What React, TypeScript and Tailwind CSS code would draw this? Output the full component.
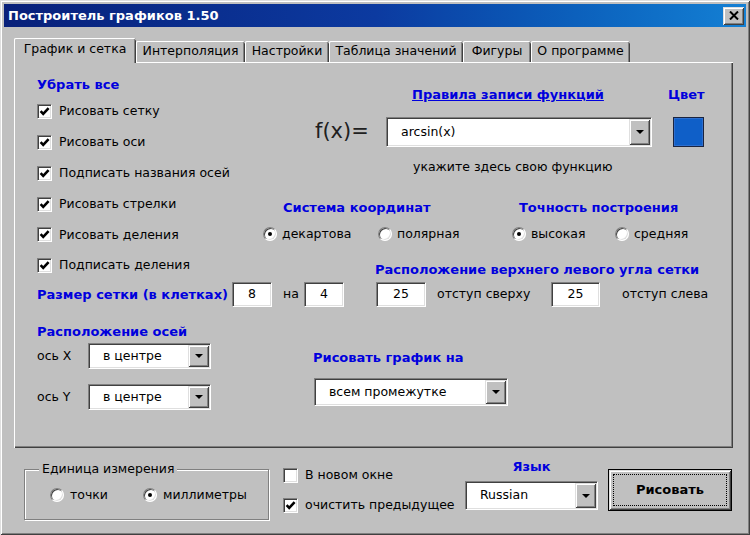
import React from "react";

const sunken =
  "bg-white border border-t-[#808080] border-l-[#808080] border-r-white border-b-white shadow-[inset_1px_1px_0_#404040,inset_-1px_-1px_0_#dfdfdf]";
const raised =
  "bg-[#c0c0c0] shadow-[inset_1px_1px_0_#dfdfdf,inset_-1px_-1px_0_#404040,inset_2px_2px_0_#fff,inset_-2px_-2px_0_#808080]";

function H({ children, className = "" }: { children: React.ReactNode; className?: string }) {
  return <span className={`text-[13px] font-bold text-[#0000dd] whitespace-nowrap ${className}`}>{children}</span>;
}

function Check({ checked, label }: { checked?: boolean; label: string }) {
  return (
    <div className="flex items-center gap-[7px] whitespace-nowrap">
      <span className={`w-[15px] h-[15px] shrink-0 flex items-center justify-center ${sunken}`}>
        {checked && (
          <svg width="11" height="11" viewBox="0 0 11 11">
            <path d="M1.6 5.2 L4.2 7.8 L9.6 2.2" stroke="black" strokeWidth="2.6" fill="none" />
          </svg>
        )}
      </span>
      <span>{label}</span>
    </div>
  );
}

function Radio({ checked, label, className = "" }: { checked?: boolean; label: string; className?: string }) {
  return (
    <div className={`flex items-center gap-[5px] whitespace-nowrap ${className}`}>
      <span
        className={`w-[14px] h-[14px] shrink-0 rounded-full flex items-center justify-center ${sunken}`}
      >
        {checked && <span className="w-[4px] h-[4px] rounded-full bg-black" />}
      </span>
      <span>{label}</span>
    </div>
  );
}

function Combo({ value, className = "" }: { value: string; className?: string }) {
  return (
    <div className={`flex items-stretch pl-[14px] pr-[1px] ${sunken} ${className}`}>
      <span className="flex-1 flex items-center whitespace-nowrap">{value}</span>
      <span className={`w-[21px] my-[1px] flex items-center justify-center ${raised}`}>
        <svg width="8" height="4" viewBox="0 0 8 4">
          <path d="M0 0h8L4 4z" fill="black" />
        </svg>
      </span>
    </div>
  );
}

function Field({ value, className = "" }: { value: string; className?: string }) {
  return <div className={`flex items-center justify-center ${sunken} ${className}`}>{value}</div>;
}

const tabs = [
  { label: "График и сетка", w: "w-[122px]" },
  { label: "Интерполяция", w: "w-[109px]" },
  { label: "Настройки", w: "w-[84px]" },
  { label: "Таблица значений", w: "w-[134px]" },
  { label: "Фигуры", w: "w-[68px]" },
  { label: "О программе", w: "w-[99px]" },
];

export default function App() {
  return (
    <div className="w-[750px] h-[535px] p-[4px] bg-[#c0c0c0] text-[12.5px] text-black font-['DejaVu_Sans',sans-serif] select-none shadow-[inset_1px_1px_0_#dfdfdf,inset_-1px_-1px_0_#404040,inset_2px_2px_0_#fff,inset_-2px_-2px_0_#808080]">
      {/* title bar */}
      <div className="h-[23px] flex items-center bg-linear-to-r from-[#08207a] via-[#0c3aa0] to-[#1480d4]">
        <span className="pl-[4px] text-[13px] font-bold text-white">Построитель графиков 1.50</span>
        <span className={`ml-auto mr-[2px] w-[21px] h-[18px] flex items-center justify-center ${raised}`}>
          <svg width="10" height="9" viewBox="0 0 10 9">
            <path d="M1 0.5 L9 8.5 M9 0.5 L1 8.5" stroke="black" strokeWidth="2" />
          </svg>
        </span>
      </div>

      <div className="ml-[10px] mt-[11px]">
        {/* tabs */}
        <div className="h-[24px] flex items-end">
          {tabs.map((t, i) =>
            i === 0 ? (
              <div
                key={t.label}
                className={`${t.w} h-[25px] -mb-[1px] relative z-10 bg-[#c0c0c0] rounded-t-[2px] flex items-center justify-center pb-[2px] shadow-[inset_1px_0_0_#fff,inset_0_1px_0_#fff,inset_-1px_0_0_#404040,inset_-2px_0_0_#808080]`}
              >
                {t.label}
              </div>
            ) : (
              <div
                key={t.label}
                className={`${t.w} h-[21px] bg-[#c0c0c0] rounded-t-[2px] flex items-center justify-center shadow-[inset_1px_0_0_#fff,inset_0_1px_0_#fff,inset_-1px_0_0_#404040,inset_-2px_0_0_#808080]`}
              >
                {t.label}
              </div>
            )
          )}
        </div>

        {/* panel */}
        <div className="w-[719px] h-[386px] pt-[14px] shadow-[inset_1px_1px_0_#fff,inset_-1px_-1px_0_#404040,inset_-2px_-2px_0_#808080]">
          {/* section A */}
          <div className="h-[206px] flex">
            <div className="w-[236px] pl-[23px] flex flex-col">
              <div className="h-[18px] flex items-center">
                <H>Убрать все</H>
              </div>
              <div className="mt-[2.3px] flex flex-col">
                {[
                  "Рисовать сетку",
                  "Рисовать оси",
                  "Подписать названия осей",
                  "Рисовать стрелки",
                  "Рисовать деления",
                  "Подписать деления",
                ].map((l) => (
                  <div key={l} className="h-[30.8px] flex items-center">
                    <Check checked label={l} />
                  </div>
                ))}
              </div>
            </div>

            <div className="flex-1 flex flex-col">
              <div className="mt-[10px] h-[18px] flex items-center">
                <span className="ml-[162px] w-[256px]">
                  <H className="underline">Правила записи функций</H>
                </span>
                <H>Цвет</H>
              </div>
              <div className="mt-[13px] h-[30px] flex items-center">
                <span className="ml-[65px] w-[71px] text-[21px] text-[#202020]">f(x)=</span>
                <Combo value="arcsin(x)" className="w-[266px] h-[30px]" />
                <span className="ml-[21px] w-[31px] h-[30px] bg-[#0f5fc8] border border-[#1a2440] shadow-[inset_0_0_0_1px_#2d6fd0]" />
              </div>
              <div className="mt-[11px] h-[18px] flex items-center">
                <span className="ml-[163px]">укажите здесь свою функцию</span>
              </div>
              <div className="mt-[23px] h-[18px] flex items-center">
                <span className="ml-[33px] w-[236px]">
                  <H>Система координат</H>
                </span>
                <H>Точность построения</H>
              </div>
              <div className="mt-[8px] h-[18px] flex items-center">
                <Radio checked label="декартова" className="ml-[13px] w-[115px]" />
                <Radio label="полярная" className="w-[134px]" />
                <Radio checked label="высокая" className="w-[103px]" />
                <Radio label="средняя" />
              </div>
              <div className="mt-[18px] h-[18px] flex items-center">
                <H className="ml-[125px]">Расположение верхнего левого угла сетки</H>
              </div>
            </div>
          </div>

          {/* section B */}
          <div className="h-[25px] flex items-stretch">
            <span className="ml-[23px] w-[195px] flex items-center">
              <H>Размер сетки (в клетках)</H>
            </span>
            <Field value="8" className="w-[40px]" />
            <span className="ml-[11px] w-[21px] flex items-center">на</span>
            <Field value="4" className="w-[40px]" />
            <Field value="25" className="ml-[32px] w-[50px]" />
            <span className="ml-[11px] w-[114px] flex items-center">отступ сверху</span>
            <Field value="25" className="w-[49px]" />
            <span className="ml-[22px] flex items-center">отступ слева</span>
          </div>

          {/* section C */}
          <div className="flex">
            <div className="w-[299px] pl-[23px] flex flex-col">
              <div className="mt-[16px] h-[18px] flex items-center">
                <H>Расположение осей</H>
              </div>
              <div className="mt-[2px] h-[26px] flex items-center">
                <span className="w-[51px]">ось X</span>
                <Combo value="в центре" className="w-[123px] h-[26px]" />
              </div>
              <div className="mt-[15px] h-[26px] flex items-center">
                <span className="w-[51px]">ось Y</span>
                <Combo value="в центре" className="w-[123px] h-[26px]" />
              </div>
            </div>
            <div className="flex flex-col">
              <div className="mt-[42px] h-[18px] flex items-center">
                <H>Рисовать график на</H>
              </div>
              <Combo value="всем промежутке" className="mt-[11px] ml-[1px] w-[194px] h-[28px]" />
            </div>
          </div>
        </div>

        {/* bottom row */}
        <div className="flex items-start">
          <div className="ml-[10px] mt-[21px] w-[245px] h-[51px] border border-[#808080] shadow-[inset_1px_1px_0_#fff,1px_1px_0_#fff] flex flex-col">
            <span className="-mt-[8px] ml-[14px] px-[3px] w-fit bg-[#c0c0c0] leading-[14px]">Единица измерения</span>
            <div className="mt-[12px] h-[14px] flex items-center">
              <Radio label="точки" className="ml-[25px] w-[93px] gap-[6px]" />
              <Radio checked label="миллиметры" className="gap-[6px]" />
            </div>
          </div>

          <div className="ml-[14px] mt-[19px] w-[182px] flex flex-col">
            <div className="h-[16px] flex items-center">
              <Check label="В новом окне" />
            </div>
            <div className="mt-[14px] h-[16px] flex items-center">
              <Check checked label="очистить предыдущее" />
            </div>
          </div>

          <div className="mt-[12px] w-[133px] flex flex-col">
            <div className="h-[14px] flex items-center justify-center">
              <H>Язык</H>
            </div>
            <Combo value="Russian" className="mt-[7px] h-[29px]" />
          </div>

          <div className="ml-[10px] mt-[21px] w-[124px] h-[42px] border border-black">
            <div className={`w-full h-full p-[4px] ${raised}`}>
              <div className="w-full h-full border border-dotted border-black flex items-center justify-center font-bold text-[13px]">
                Рисовать
              </div>
            </div>
          </div>
        </div>
      </div>
    </div>
  );
}
